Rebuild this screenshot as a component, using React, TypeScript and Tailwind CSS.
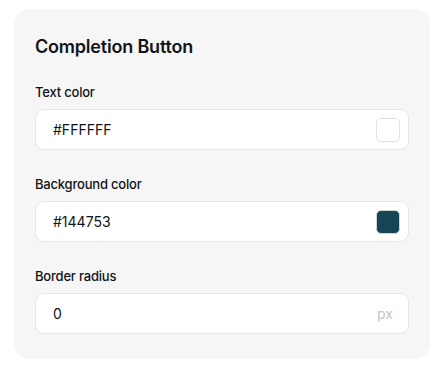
import { useState } from 'react';

export default function App() {
  const [textColor, setTextColor] = useState('#FFFFFF');
  const [bgColor, setBgColor] = useState('#144753');
  const [radius, setRadius] = useState('0');

  return (
    <div className="min-h-screen bg-white pl-[14px] pt-[9px] font-['Inter',sans-serif] text-[#111418]">
      <div className="w-[416px] rounded-[16px] bg-[#f6f6f6] px-[21px] pt-[26px] pb-[25px]">
        <h2 className="text-[18px] font-semibold leading-[24px] tracking-[-0.2px]">Completion Button</h2>

        <div className="mt-[24px] flex flex-col gap-[25px]">
          {/* Text color */}
          <div>
            <label className="block text-[13px] font-medium leading-[18px] tracking-[-0.2px]">Text color</label>
            <div className="mt-[8px] flex h-[41px] items-center justify-between rounded-[9px] border border-[#e6e6e6] bg-white pl-[17px] pr-[8px]">
              <input
                value={textColor}
                onChange={(e) => setTextColor(e.target.value)}
                className="w-full bg-transparent text-[14px] outline-none"
              />
              <span className="h-[24px] w-[24px] shrink-0 rounded-[5px] border border-[#e2e2e2]" style={{ backgroundColor: textColor }} />
            </div>
          </div>

          {/* Background color */}
          <div>
            <label className="block text-[13px] font-medium leading-[18px] tracking-[-0.2px]">Background color</label>
            <div className="mt-[8px] flex h-[41px] items-center justify-between rounded-[9px] border border-[#e6e6e6] bg-white pl-[17px] pr-[8px]">
              <input
                value={bgColor}
                onChange={(e) => setBgColor(e.target.value)}
                className="w-full bg-transparent text-[14px] outline-none"
              />
              <span className="h-[24px] w-[24px] shrink-0 rounded-[5px] border border-[#d0d4d6]" style={{ backgroundColor: bgColor }} />
            </div>
          </div>

          {/* Border radius */}
          <div>
            <label className="block text-[13px] font-medium leading-[18px] tracking-[-0.2px]">Border radius</label>
            <div className="mt-[8px] flex h-[41px] items-center justify-between rounded-[9px] border border-[#e6e6e6] bg-white pl-[17px] pr-[15px]">
              <input
                value={radius}
                onChange={(e) => setRadius(e.target.value)}
                className="w-full bg-transparent text-[14px] outline-none"
              />
              <span className="text-[14px] text-[#c4c4c4]">px</span>
            </div>
          </div>
        </div>
      </div>
    </div>
  );
}
